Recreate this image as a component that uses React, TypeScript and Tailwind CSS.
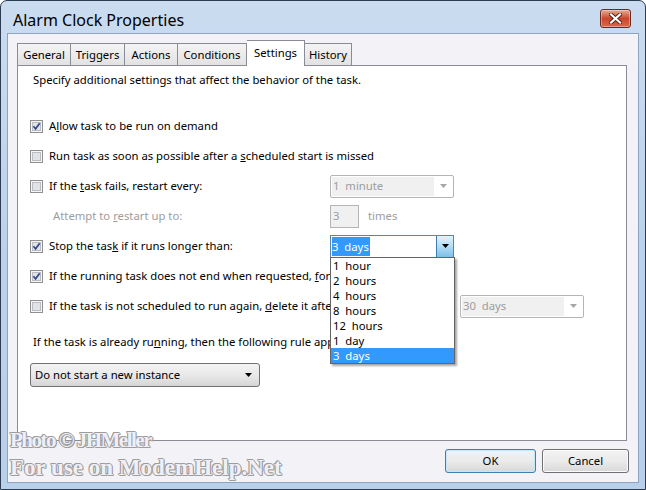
import React from "react";

function CheckBox({ checked }: { checked?: boolean }) {
  return (
    <svg width="13" height="13" viewBox="0 0 13 13" className="shrink-0">
      <rect x="0.5" y="0.5" width="12" height="12" fill="#f6f6f6" stroke="#8f8f8f" />
      <rect x="2.5" y="2.5" width="8" height="8" fill="#e1e3e7" stroke="#b9bdc3" />
      {checked && (
        <path d="M3.4 6.2 L5.6 8.8 L9.7 3.3" fill="none" stroke="#34488a" strokeWidth="1.7" />
      )}
    </svg>
  );
}

function Arrow({ color }: { color: string }) {
  return (
    <svg width="7" height="4" viewBox="0 0 7 4">
      <path d="M0 0H7L3.5 4Z" fill={color} />
    </svg>
  );
}

function DisabledCombo({ text }: { text: string }) {
  return (
    <div className="flex h-[23px] w-[124px] shrink-0 items-center rounded-[2px] border border-[#b5b5b5] bg-white">
      <div className="ml-[1px] flex h-[19px] w-[102px] items-center bg-[#f0f0f0] pl-[1px] whitespace-pre text-[#9d9d9d]">
        {text}
      </div>
      <div className="flex flex-1 items-center justify-center">
        <Arrow color="#a6a6a6" />
      </div>
    </div>
  );
}

const items = ["1  hour", "2  hours", "4  hours", "8  hours", "12  hours", "1  day", "3  days"];

export default function App() {
  return (
    <div className="relative h-[490px] w-[646px] bg-white font-['Noto_Sans',sans-serif] text-[11.3px] text-black">
      <div className="flex h-full w-full flex-col rounded-t-[7px] border border-[#2d3c50] bg-gradient-to-b from-[#cadcf0] via-[#bcd2ec] to-[#b9d0ea] px-[6px] pb-[6px]">
        {/* Title bar */}
        <div className="flex h-[32px] shrink-0 items-center justify-between">
          <div className="pl-[6px] pt-[5px] text-[16px] text-black">Alarm Clock Properties</div>
          <div className="mr-[8px] mt-[3px] flex h-[19px] w-[31px] items-center justify-center rounded-[3px] border border-[#6b2a20] bg-gradient-to-b from-[#e8a99a] via-[#c9452c] to-[#d86a4c] shadow-[inset_0_0_0_1px_rgba(255,255,255,0.35)]">
            <svg width="13" height="11" viewBox="0 0 13 11">
              <path d="M2 1.5 L11 9.5 M11 1.5 L2 9.5" stroke="#5a1d12" strokeWidth="4" strokeLinecap="square" />
              <path d="M2 1.5 L11 9.5 M11 1.5 L2 9.5" stroke="#ffffff" strokeWidth="2.2" strokeLinecap="square" />
            </svg>
          </div>
        </div>

        {/* Client area */}
        <div className="flex flex-1 flex-col border border-[#8ea3be] bg-[#f3f2f7]">
          {/* Tabs */}
          <div className="flex items-end pl-[9px] pt-[6px]">
            <div className="flex h-[22px] w-[54px] items-center justify-center border border-b-0 border-[#898c95] bg-gradient-to-b from-[#f4f4f4] to-[#e2e2e2] pt-[1px]">General</div>
            <div className="flex h-[22px] w-[54px] items-center justify-center border border-b-0 border-l-0 border-[#898c95] bg-gradient-to-b from-[#f4f4f4] to-[#e2e2e2] pt-[1px]">Triggers</div>
            <div className="flex h-[22px] w-[53px] items-center justify-center border border-b-0 border-l-0 border-[#898c95] bg-gradient-to-b from-[#f4f4f4] to-[#e2e2e2] pt-[1px]">Actions</div>
            <div className="flex h-[22px] w-[69px] items-center justify-center border border-b-0 border-l-0 border-[#898c95] bg-gradient-to-b from-[#f4f4f4] to-[#e2e2e2] pt-[1px]">Conditions</div>
            <div className="relative z-10 -mb-px flex h-[26px] w-[58px] items-start justify-center border border-b-0 border-l-0 border-[#898c95] bg-white pt-[4px]">Settings</div>
            <div className="flex h-[22px] w-[47px] items-center justify-center border border-b-0 border-l-0 border-[#898c95] bg-gradient-to-b from-[#f4f4f4] to-[#e2e2e2] pt-[1px]">History</div>
          </div>

          {/* Panel */}
          <div className="ml-[9px] flex h-[376px] w-[610px] flex-col border border-[#898c95] bg-white">
            <div className="pl-[15px] pt-[6px] leading-[16px]">
              Specify additional settings that affect the behavior of the task.
            </div>

            <div className="mt-[23px] flex flex-col pl-[12px]">
              <div className="flex h-[30px] items-center">
                <CheckBox checked />
                <span className="ml-[6px]">
                  A<span className="underline">l</span>low task to be run on demand
                </span>
              </div>
              <div className="flex h-[30px] items-center">
                <CheckBox />
                <span className="ml-[6px]">
                  Run task as soon as possible after a <span className="underline">s</span>cheduled start is missed
                </span>
              </div>
              <div className="flex h-[30px] items-center">
                <CheckBox />
                <span className="ml-[6px] w-[281px] whitespace-nowrap">
                  If the <span className="underline">t</span>ask fails, restart every:
                </span>
                <DisabledCombo text="1  minute" />
              </div>
              <div className="flex h-[30px] items-center">
                <span className="ml-[23px] w-[277px] whitespace-nowrap text-[#9d9d9d]">
                  Attempt to <span className="underline">r</span>estart up to:
                </span>
                <div className="flex h-[23px] w-[29px] items-center border border-[#b5b5b5] bg-[#f0f0f0] pl-[2px] text-[#9d9d9d]">3</div>
                <span className="ml-[9px] text-[#9d9d9d]">times</span>
              </div>
              <div className="flex h-[30px] items-center">
                <CheckBox checked />
                <span className="ml-[6px] w-[281px] whitespace-nowrap">
                  Stop the tas<span className="underline">k</span> if it runs longer than:
                </span>
                <div className="relative h-[23px] w-[124px]">
                  <div className="flex h-full items-center border border-[#5b84aa] bg-white">
                    <div className="flex-1 pl-[1px]">
                      <span className="inline-block h-[19px] whitespace-pre bg-[#3399ff] pr-[1px] leading-[19px] text-white">3  days</span>
                    </div>
                    <div className="flex h-full w-[17px] items-center justify-center border-l border-[#3c7fb1] bg-gradient-to-b from-[#e4f3fc] via-[#b3dcf5] to-[#7dbfe9]">
                      <Arrow color="#000000" />
                    </div>
                  </div>
                  <div className="absolute left-0 top-[22px] z-20 w-[125px] border border-[#646464] bg-white shadow-[2px_2px_2px_rgba(0,0,0,0.35)]">
                    {items.map((it) => (
                      <div
                        key={it}
                        className={
                          it === "3  days"
                            ? "h-[15px] whitespace-pre bg-[#3399ff] pl-[2px] leading-[15px] text-white"
                            : "h-[15px] whitespace-pre pl-[2px] leading-[15px]"
                        }
                      >
                        {it}
                      </div>
                    ))}
                  </div>
                </div>
              </div>
              <div className="flex h-[30px] items-center">
                <CheckBox checked />
                <span className="ml-[6px] whitespace-nowrap">
                  If the running task does not end when requested, <span className="underline">f</span>orce it to stop
                </span>
              </div>
              <div className="flex h-[30px] items-center">
                <CheckBox />
                <span className="ml-[6px] w-[411px] whitespace-nowrap">
                  If the task is not scheduled to run again, <span className="underline">d</span>elete it after:
                </span>
                <DisabledCombo text="30  days" />
              </div>
            </div>

            <div className="mt-[13px] pl-[15px] leading-[16px]">
              If the task is already ru<span className="underline">n</span>ning, then the following rule applies:
            </div>

            <div className="ml-[12px] mt-[13px] flex h-[24px] w-[230px] items-center justify-between rounded-[3px] border border-[#707070] bg-gradient-to-b from-[#f3f3f3] via-[#e9e9e9] to-[#d6d6d6] pl-[4px] pr-[7px]">
              <span>Do not start a new instance</span>
              <Arrow color="#000000" />
            </div>
          </div>

          {/* Buttons */}
          <div className="mt-[8px] flex justify-end gap-[6px] pr-[9px]">
            <div className="flex h-[24px] w-[91px] items-center justify-center rounded-[3px] border border-[#3c7fb1] bg-gradient-to-b from-[#f2f2f2] via-[#ebebeb] to-[#d8d8d8] shadow-[inset_0_0_0_1px_#c6e6f9]">OK</div>
            <div className="flex h-[24px] w-[87px] items-center justify-center rounded-[3px] border border-[#707070] bg-gradient-to-b from-[#f2f2f2] via-[#ebebeb] to-[#d8d8d8] shadow-[inset_0_0_0_1px_#fbfbfb]">Cancel</div>
          </div>
        </div>
      </div>

      {/* Watermark */}
      <div className="pointer-events-none absolute left-[10px] top-[426px] z-30 font-['Liberation_Serif',serif] font-bold leading-[28px] text-[#f1eff5] [text-shadow:1px_0_#9d9d9d,-1px_0_#9d9d9d,0_1px_#9d9d9d,0_-1px_#9d9d9d,1px_1px_#9d9d9d,-1px_-1px_#9d9d9d]">
        <div className="text-[21px] tracking-[-1.5px]">Photo © JHMeller</div>
        <div className="text-[23px] tracking-[0px]">For use on ModemHelp.Net</div>
      </div>
    </div>
  );
}
